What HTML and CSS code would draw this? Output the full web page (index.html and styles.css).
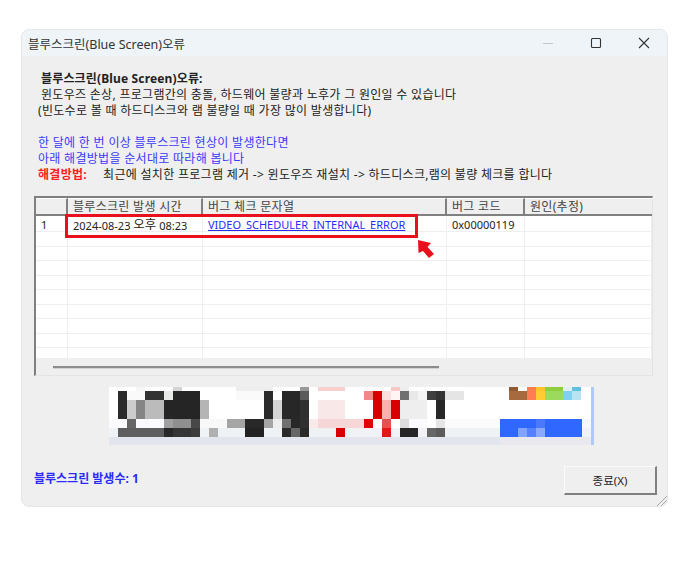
FILE: index.html
```html
<!DOCTYPE html>
<html lang="ko">
<head>
    <meta charset="UTF-8">
    <meta name="viewport" content="width=device-width, initial-scale=1.0">
    <title>블루스크린(Blue Screen)오류</title>
    <link rel="stylesheet" href="styles.css">
</head>
<body>
    <div class="window">
        <div class="titlebar">
            <span class="title">블루스크린(Blue Screen)오류</span>
            <div class="controls">
                <svg class="control" width="12" height="12" viewBox="0 0 12 12"><path d="M1 6.5h10" stroke="#c4c6c8" stroke-width="1"/></svg>
                <svg class="control" width="12" height="12" viewBox="0 0 12 12"><rect x="1.5" y="1.5" width="9" height="9" rx="1" fill="none" stroke="#333" stroke-width="1.1"/></svg>
                <svg class="control" width="12" height="12" viewBox="0 0 12 12"><path d="M1 1l10 10M11 1L1 11" stroke="#333" stroke-width="1.1"/></svg>
            </div>
        </div>

        <div class="content">
            <div class="message">
                <div class="line indent bold">블루스크린(Blue Screen)오류:</div>
                <div class="line indent">윈도우즈 손상, 프로그램간의 충돌, 하드웨어 불량과 노후가 그 원인일 수 있습니다</div>
                <div class="line">(빈도수로 볼 때 하드디스크와 램 불량일 때 가장 많이 발생합니다)</div>
                <div class="line">&nbsp;</div>
                <div class="line blue">한 달에 한 번 이상 블루스크린 현상이 발생한다면</div>
                <div class="line blue">아래 해결방법을 순서대로 따라해 봅니다</div>
                <div class="line fix">
                    <span class="fix-label">해결방법:</span>
                    <span>최근에 설치한 프로그램 제거 -&gt; 윈도우즈 재설치 -&gt; 하드디스크,램의 불량 체크를 합니다</span>
                </div>
            </div>

            <div class="grid">
                <div class="grid-row grid-head">
                    <div class="cell"></div>
                    <div class="cell">블루스크린 발생 시간</div>
                    <div class="cell">버그 체크 문자열</div>
                    <div class="cell">버그 코드</div>
                    <div class="cell">원인(추정)</div>
                </div>
                <div class="grid-body">
                    <div class="grid-row first">
                        <div class="cell num">1</div>
                        <div class="cell">2024-08-23 <span class="ampm">오후</span> 08:23</div>
                        <div class="cell"><a class="link" href="#">VIDEO_SCHEDULER_INTERNAL_ERROR</a></div>
                        <div class="cell">0x00000119</div>
                        <div class="cell"></div>
                    </div>
                    <div class="grid-row"><div class="cell"></div><div class="cell"></div><div class="cell"></div><div class="cell"></div><div class="cell"></div></div>
                    <div class="grid-row"><div class="cell"></div><div class="cell"></div><div class="cell"></div><div class="cell"></div><div class="cell"></div></div>
                    <div class="grid-row"><div class="cell"></div><div class="cell"></div><div class="cell"></div><div class="cell"></div><div class="cell"></div></div>
                    <div class="grid-row"><div class="cell"></div><div class="cell"></div><div class="cell"></div><div class="cell"></div><div class="cell"></div></div>
                    <div class="grid-row"><div class="cell"></div><div class="cell"></div><div class="cell"></div><div class="cell"></div><div class="cell"></div></div>
                    <div class="grid-row"><div class="cell"></div><div class="cell"></div><div class="cell"></div><div class="cell"></div><div class="cell"></div></div>
                    <div class="grid-row"><div class="cell"></div><div class="cell"></div><div class="cell"></div><div class="cell"></div><div class="cell"></div></div>
                    <div class="grid-row"><div class="cell"></div><div class="cell"></div><div class="cell"></div><div class="cell"></div><div class="cell"></div></div>
                    <div class="grid-row last"><div class="cell"></div><div class="cell"></div><div class="cell"></div><div class="cell"></div><div class="cell"></div></div>
                </div>
                <div class="hscroll"><div class="hscroll-thumb"></div></div>

                <div class="highlight"></div>
                <svg class="arrow" width="18" height="20" viewBox="0 0 18 20"><polygon points="1,1 14,4 10.5,8 17,15 12,19 6,12 1.5,14" fill="#e8101c"/></svg>
            </div>

            <!-- blurred ad strip -->
            <svg class="mosaic" width="485" height="58" viewBox="0 0 485 58" shape-rendering="crispEdges">
                <rect width="485" height="58" fill="#fff"/>
                <!-- row a -->
                <g>
                    <rect x="27" y="0" width="9" height="4" fill="#f6f6f6"/>
                    <rect x="64" y="0" width="9" height="4" fill="#d5d5d5"/>
                    <rect x="127" y="0" width="37" height="4" fill="#eee"/>
                    <rect x="191" y="0" width="9" height="4" fill="#999"/>
                    <rect x="209" y="0" width="27" height="4" fill="#f8d0d0"/>
                    <rect x="282" y="0" width="9" height="4" fill="#f8c8c8"/>
                    <rect x="291" y="0" width="9" height="4" fill="#eee"/>
                    <rect x="400" y="0" width="9" height="4" fill="#8f5a30"/>
                    <rect x="418" y="0" width="9" height="4" fill="#ff7c4f"/>
                    <rect x="427" y="0" width="9" height="4" fill="#ffc42c"/>
                    <rect x="436" y="0" width="18" height="4" fill="#8fcf3f"/>
                    <rect x="454" y="0" width="9" height="4" fill="#e0f0f5"/>
                    <rect x="463" y="0" width="9" height="4" fill="#60c0e0"/>
                </g>
                <!-- row b -->
                <g>
                    <rect x="9" y="4" width="9" height="9" fill="#2b2b2b"/>
                    <rect x="18" y="4" width="18" height="9" fill="#fafafa"/>
                    <rect x="36" y="4" width="19" height="9" fill="#333"/>
                    <rect x="55" y="4" width="9" height="9" fill="#e8eae8"/>
                    <rect x="64" y="4" width="27" height="9" fill="#252525"/>
                    <rect x="127" y="4" width="28" height="9" fill="#fafafa"/>
                    <rect x="155" y="4" width="9" height="9" fill="#2b2b2b"/>
                    <rect x="173" y="4" width="18" height="9" fill="#272727"/>
                    <rect x="191" y="4" width="9" height="9" fill="#5a5a5a"/>
                    <rect x="255" y="4" width="9" height="9" fill="#f08888"/>
                    <rect x="264" y="4" width="9" height="9" fill="#d80000"/>
                    <rect x="273" y="4" width="9" height="9" fill="#fbdede"/>
                    <rect x="282" y="4" width="9" height="9" fill="#fff4f4"/>
                    <rect x="291" y="4" width="9" height="9" fill="#707070"/>
                    <rect x="300" y="4" width="9" height="9" fill="#e8e8e8"/>
                    <rect x="309" y="4" width="9" height="9" fill="#f4f4f4"/>
                    <rect x="318" y="4" width="9" height="9" fill="#404040"/>
                    <rect x="327" y="4" width="9" height="9" fill="#333"/>
                    <rect x="336" y="4" width="19" height="9" fill="#e5e5e5"/>
                    <rect x="400" y="4" width="18" height="9" fill="#a66a3e"/>
                    <rect x="418" y="4" width="9" height="9" fill="#ff7c54"/>
                    <rect x="427" y="4" width="9" height="9" fill="#ffcc33"/>
                    <rect x="436" y="4" width="18" height="9" fill="#9cd95c"/>
                    <rect x="454" y="4" width="9" height="9" fill="#80d0f2"/>
                    <rect x="463" y="4" width="9" height="9" fill="#b8e4f2"/>
                </g>
                <!-- row c -->
                <g>
                    <rect x="9" y="13" width="9" height="19" fill="#2b2b2b"/>
                    <rect x="18" y="13" width="9" height="19" fill="#ccc"/>
                    <rect x="27" y="13" width="9" height="19" fill="#858585"/>
                    <rect x="36" y="13" width="19" height="19" fill="#bbb"/>
                    <rect x="55" y="13" width="36" height="19" fill="#252525"/>
                    <rect x="91" y="13" width="9" height="19" fill="#b5b5b5"/>
                    <rect x="155" y="13" width="9" height="19" fill="#2b2b2b"/>
                    <rect x="164" y="13" width="9" height="19" fill="#d5d5d5"/>
                    <rect x="173" y="13" width="18" height="19" fill="#272727"/>
                    <rect x="191" y="13" width="9" height="19" fill="#303030"/>
                    <rect x="209" y="13" width="27" height="19" fill="#f9e8e8"/>
                    <rect x="264" y="13" width="9" height="19" fill="#d80000"/>
                    <rect x="273" y="13" width="9" height="19" fill="#f5b0b0"/>
                    <rect x="282" y="13" width="9" height="19" fill="#d80000"/>
                    <rect x="291" y="13" width="27" height="19" fill="#eee"/>
                    <rect x="327" y="13" width="9" height="19" fill="#272727"/>
                </g>
                <!-- row d -->
                <g>
                    <rect x="0" y="32" width="18" height="9" fill="#fbfbff"/>
                    <rect x="18" y="32" width="9" height="9" fill="#666"/>
                    <rect x="27" y="32" width="28" height="9" fill="#fbfbff"/>
                    <rect x="55" y="32" width="9" height="9" fill="#a0a0a0"/>
                    <rect x="64" y="32" width="18" height="9" fill="#909090"/>
                    <rect x="82" y="32" width="9" height="9" fill="#484848"/>
                    <rect x="91" y="32" width="27" height="9" fill="#f8f8f8"/>
                    <rect x="118" y="32" width="18" height="9" fill="#a5a5a5"/>
                    <rect x="136" y="32" width="19" height="9" fill="#282828"/>
                    <rect x="155" y="32" width="9" height="9" fill="#a5a5a5"/>
                    <rect x="164" y="32" width="9" height="9" fill="#eee"/>
                    <rect x="173" y="32" width="9" height="9" fill="#707070"/>
                    <rect x="182" y="32" width="9" height="9" fill="#282828"/>
                    <rect x="191" y="32" width="9" height="9" fill="#303030"/>
                    <rect x="200" y="32" width="9" height="9" fill="#f9eaea"/>
                    <rect x="209" y="32" width="46" height="9" fill="#f6d6d6"/>
                    <rect x="255" y="32" width="9" height="9" fill="#e00000"/>
                    <rect x="273" y="32" width="9" height="9" fill="#e65050"/>
                    <rect x="291" y="32" width="9" height="9" fill="#ddd"/>
                    <rect x="300" y="32" width="18" height="9" fill="#fafaff"/>
                    <rect x="327" y="32" width="9" height="9" fill="#e5e5e5"/>
                    <rect x="336" y="32" width="55" height="9" fill="#fbfbfb"/>
                    <rect x="391" y="32" width="82" height="9" fill="#3068ff"/>
                    <rect x="427" y="32" width="9" height="9" fill="#4a78ff"/>
                    <rect x="473" y="32" width="9" height="9" fill="#f5f7fc"/>
                </g>
                <!-- row e -->
                <g>
                    <rect x="0" y="41" width="9" height="9" fill="#f0f3f6"/>
                    <rect x="9" y="41" width="46" height="9" fill="#5e5e5e"/>
                    <rect x="55" y="41" width="9" height="9" fill="#282828"/>
                    <rect x="64" y="41" width="18" height="9" fill="#353535"/>
                    <rect x="82" y="41" width="9" height="9" fill="#3c3c3c"/>
                    <rect x="91" y="41" width="9" height="9" fill="#f0f3f6"/>
                    <rect x="100" y="41" width="9" height="9" fill="#b0b0b0"/>
                    <rect x="109" y="41" width="27" height="9" fill="#eff2f5"/>
                    <rect x="136" y="41" width="19" height="9" fill="#222"/>
                    <rect x="155" y="41" width="18" height="9" fill="#eff2f5"/>
                    <rect x="173" y="41" width="9" height="9" fill="#2a2a2a"/>
                    <rect x="182" y="41" width="9" height="9" fill="#666"/>
                    <rect x="191" y="41" width="9" height="9" fill="#2a2a2a"/>
                    <rect x="200" y="41" width="27" height="9" fill="#eff2f5"/>
                    <rect x="227" y="41" width="9" height="9" fill="#d80000"/>
                    <rect x="236" y="41" width="37" height="9" fill="#f0f2f5"/>
                    <rect x="273" y="41" width="9" height="9" fill="#e01818"/>
                    <rect x="282" y="41" width="9" height="9" fill="#f0f2f5"/>
                    <rect x="291" y="41" width="18" height="9" fill="#252525"/>
                    <rect x="309" y="41" width="9" height="9" fill="#f0f2f5"/>
                    <rect x="318" y="41" width="9" height="9" fill="#666"/>
                    <rect x="327" y="41" width="9" height="9" fill="#5c5c5c"/>
                    <rect x="336" y="41" width="55" height="9" fill="#eff2f5"/>
                    <rect x="391" y="41" width="82" height="9" fill="#3068ff"/>
                    <rect x="409" y="41" width="9" height="9" fill="#82a2ff"/>
                    <rect x="418" y="41" width="9" height="9" fill="#5580ff"/>
                    <rect x="427" y="41" width="9" height="9" fill="#8aa8ff"/>
                    <rect x="473" y="41" width="9" height="9" fill="#f0f2f5"/>
                </g>
                <!-- row f and right edge -->
                <rect x="0" y="50" width="391" height="8" fill="#e2e5ee"/>
                <rect x="391" y="50" width="91" height="8" fill="#e8e8ee"/>
                <rect x="482" y="0" width="3" height="58" fill="#b0caf8"/>
            </svg>

            <div class="footer">
                <span class="count">블루스크린 발생수: 1</span>
                <button class="close-btn">종료(X)</button>
            </div>
        </div>

        <svg class="grip" width="11" height="11" viewBox="0 0 11 11"><path d="M11 1L1 11M11 5L5 11M11 9L9 11" stroke="#a8a8a8" stroke-width="1"/></svg>
    </div>
</body>
</html>
```

FILE: styles.css
```css
body {
    margin: 0;
    background: #fff;
    font-family: "Noto Sans", "Noto Sans CJK KR", sans-serif;
    font-size: 11px;
    color: #222;
}

.window {
    position: relative;
    width: 647px;
    height: 478px;
    margin: 29px 0 0 21px;
    box-sizing: border-box;
    background: #efefef;
    border: 1px solid #e2e5ea;
    border-radius: 8px;
    overflow: hidden;
    display: flex;
    flex-direction: column;
}

.titlebar {
    height: 26px;
    flex: none;
    background: #eff4f9;
    display: flex;
    align-items: center;
    justify-content: space-between;
    padding: 0 17px 0 6px;
}

.title {
    font-size: 12.5px;
    color: #333;
}

.controls {
    display: flex;
    gap: 36px;
}

.content {
    flex: 1;
    padding: 15px 14px 11px 12px;
    display: flex;
    flex-direction: column;
}

.message {
    padding-left: 4px;
    font-size: 12px;
    letter-spacing: 0.3px;
}

.line {
    height: 16px;
    line-height: 16px;
    white-space: nowrap;
}

.indent {
    padding-left: 3px;
}

.bold {
    font-weight: 700;
    letter-spacing: 0.15px;
}

.blue {
    color: #3a3aff;
}

.fix {
    display: flex;
    gap: 16px;
}

.fix-label {
    color: #ff2020;
    font-weight: 700;
}

.grid {
    position: relative;
    margin-top: 13px;
    width: 619px;
    height: 180px;
    box-sizing: border-box;
    border-top: 2px solid #808080;
    border-left: 2px solid #808080;
    border-right: 1px solid #e4e4e4;
    border-bottom: 1px solid #e4e4e4;
    display: flex;
    flex-direction: column;
}

.grid-row {
    display: grid;
    grid-template-columns: 32px 135px 244px 78px 1fr;
    height: 14.5px;
    box-sizing: border-box;
}

.grid-body {
    height: 142px;
    background: #fff;
    overflow: hidden;
}

.cell {
    padding-left: 5px;
    border-right: 1px solid #efefef;
    border-bottom: 1px solid #efefef;
    line-height: 15px;
    white-space: nowrap;
    overflow: hidden;
}

.grid-head {
    height: 18px;
    background: #efefef;
    border-bottom: 2px solid #808080;
    color: #444;
    font-size: 12px;
    letter-spacing: 0.3px;
}

.grid-head .cell {
    border-right: 2px solid #808080;
    border-bottom: 0;
    border-top: 1px solid #fff;
}

.grid-head .cell:last-child {
    border-right: 0;
}

.first {
    height: 16px;
}

.first .cell {
    line-height: 17px;
    color: #222;
}

.ampm {
    font-size: 12.5px;
    vertical-align: 1px;
}

.last {
    height: 10px;
}

.last .cell {
    border-bottom: 0;
}

.link {
    color: #2a2aff;
}

.hscroll {
    flex: 1;
    padding: 8px 0 0 17px;
}

.hscroll-thumb {
    width: 386px;
    height: 2px;
    background: #8c8c8c;
    border-bottom: 1px solid #d4d4d4;
}

.highlight {
    position: absolute;
    left: 29px;
    top: 16px;
    width: 353px;
    height: 24px;
    box-sizing: border-box;
    border: 3px solid #e8101c;
}

.arrow {
    position: absolute;
    left: 381px;
    top: 41px;
}

.mosaic {
    display: block;
    margin: 11px 0 0 75px;
    flex: none;
}

.footer {
    margin-top: 21px;
    display: flex;
    justify-content: space-between;
    align-items: flex-start;
    width: 623px;
}

.count {
    margin-top: 3px;
    color: #2a2aff;
    font-size: 12px;
    font-weight: 700;
}

.close-btn {
    width: 93px;
    height: 29px;
    padding: 0;
    background: #efefef;
    border: 0;
    border-top: 1px solid #fafafa;
    border-left: 1px solid #fafafa;
    border-right: 2px solid #808080;
    border-bottom: 2px solid #808080;
    font-family: inherit;
    font-size: 11.5px;
    color: #222;
}

.grip {
    position: absolute;
    right: 0;
    bottom: 0;
}
```
